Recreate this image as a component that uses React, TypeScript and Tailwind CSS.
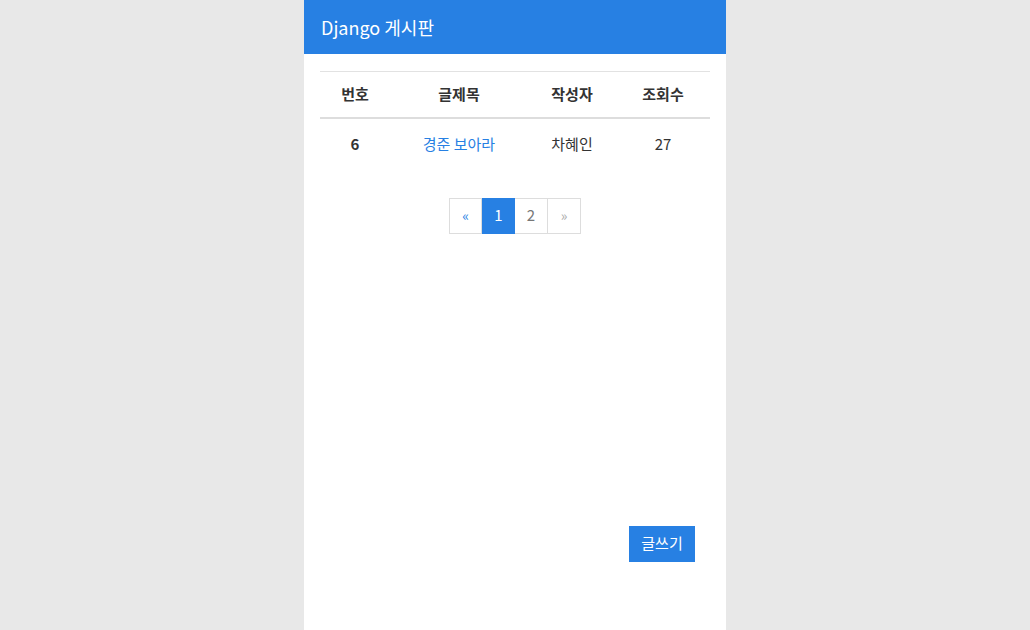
const rows = [{ id: 6, title: "경준 보아라", author: "차혜인", views: 27 }];

export default function App() {
  return (
    <div
      className="flex min-h-screen justify-center bg-[#e8e8e8] text-[15px] text-[#333]"
      style={{ fontFamily: '"Noto Sans CJK KR", "Noto Sans", sans-serif' }}
    >
      <div className="min-h-screen w-[422px] bg-white">
        <div className="flex h-[54px] items-center bg-[#2780e3] px-[17px] text-[18px] text-white">
          Django 게시판
        </div>

        <div className="px-4 pt-[17px]">
          <table className="w-full border-collapse border-t border-[#e2e2e2] text-center">
            <colgroup>
              <col className="w-[70px]" />
              <col className="w-[138px]" />
              <col className="w-[88px]" />
              <col className="w-[94px]" />
            </colgroup>
            <thead>
              <tr className="h-[46px] border-b-2 border-[#dddddd] font-bold">
                <th>번호</th>
                <th>글제목</th>
                <th>작성자</th>
                <th>조회수</th>
              </tr>
            </thead>
            <tbody>
              {rows.map((r) => (
                <tr key={r.id} className="h-[52px]">
                  <td className="font-bold">{r.id}</td>
                  <td>
                    <a className="text-[#2780e3]">{r.title}</a>
                  </td>
                  <td>{r.author}</td>
                  <td>{r.views}</td>
                </tr>
              ))}
            </tbody>
          </table>

          <div className="mt-[28px] flex justify-center">
            <div className="flex h-[36px]">
              <span className="flex w-[33px] items-center justify-center border border-[#dddddd] text-[14px] text-[#2780e3]">
                «
              </span>
              <span className="flex w-[33px] items-center justify-center border border-[#2780e3] bg-[#2780e3] text-white">
                1
              </span>
              <span className="flex w-[33px] items-center justify-center border border-l-0 border-[#dddddd] text-[#777]">
                2
              </span>
              <span className="flex w-[33px] items-center justify-center border border-l-0 border-[#dddddd] text-[14px] text-[#aaa]">
                »
              </span>
            </div>
          </div>

          <div className="mt-[292px] flex justify-end pr-[15px]">
            <button className="h-[36px] w-[66px] bg-[#2780e3] text-white">글쓰기</button>
          </div>
        </div>
      </div>
    </div>
  );
}
